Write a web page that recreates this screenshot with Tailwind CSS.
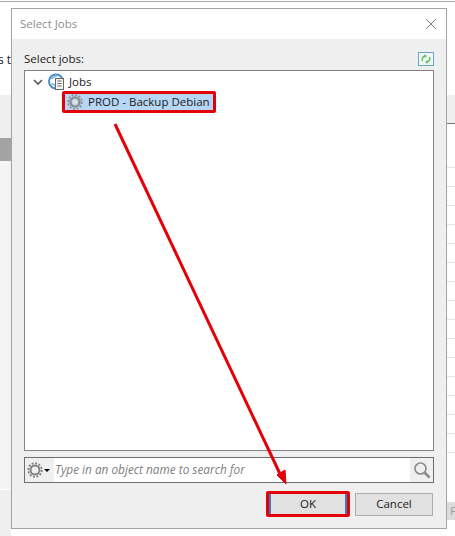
<!DOCTYPE html>
<html lang="en">
<head>
    <meta charset="UTF-8">
    <script src="https://cdn.jsdelivr.net/npm/@tailwindcss/browser@4"></script>
    <title>Select Jobs</title>
</head>
<body class="bg-white font-['Open_Sans','Noto_Sans',sans-serif] text-[11.5px] text-[#1a1a1a]">
    <div class="relative w-[455px] h-[536px] overflow-hidden">
        <!-- Window behind the dialog -->
        <div class="absolute top-0 left-0 w-full border-b border-[#a8a8a8] h-[2px]"></div>
        <div class="absolute left-[-2px] top-[52px] text-[12px] leading-4 whitespace-nowrap">s to</div>
        <div class="absolute left-0 top-[95px] w-[11px] h-[43px] bg-[#efefef]"></div>
        <div class="absolute left-0 top-[138px] w-[11px] h-[23px] bg-[#a3a3a3]"></div>
        <div class="absolute left-0 top-[161px] w-[11px] h-[328px] bg-[#f4f4f4]"></div>
        <div class="absolute left-0 top-[490px] w-[11px] h-[46px] bg-[#efefef]"></div>
        <div class="absolute right-0 top-[95px] w-[8px] h-[29px] bg-[#efefef] border-b border-[#777]"></div>
        <div class="absolute right-0 top-[167px] w-[8px] h-[300px] bg-[repeating-linear-gradient(to_bottom,#e4e4e4_0,#e4e4e4_1px,transparent_1px,transparent_19px)]"></div>
        <div class="absolute right-0 top-[502px] w-[8px] h-[18px] bg-[#dcdcdc] text-[#999] pl-[3px] leading-[18px] overflow-hidden">F</div>

        <!-- Select Jobs dialog -->
        <div class="absolute left-[11px] top-[8px] w-[436px] h-[521px] border border-[#a3a3a3] bg-[#efefef] flex flex-col">
            <div class="h-[30px] bg-white flex items-center justify-between pl-[8px] pr-[9px] text-[#8e8e8e] shrink-0">
                <span>Select Jobs</span>
                <svg class="w-[12px] h-[12px]" viewBox="0 0 12 12" fill="none" stroke="#808080" stroke-width="1"><path d="M1 1l10 10M11 1L1 11"/></svg>
            </div>
            <div class="flex-1 flex flex-col px-[12px] min-h-0">
                <div class="h-[31px] flex items-end justify-between pb-[3px] shrink-0">
                    <span class="leading-4">Select jobs:</span>
                    <svg class="w-[16px] h-[14px] mb-[1px]" viewBox="0 0 16 14" fill="none">
                        <rect x="0.5" y="0.5" width="15" height="13" fill="#f2f8fa" stroke="#6ba5c4"/>
                        <path d="M4.5 9a3.6 3.6 0 0 1 2.5-5M11.5 5a3.6 3.6 0 0 1-2.5 5" stroke="#63c556" stroke-width="1.6"/>
                        <path d="M6.5 2l2.5 2-2.5 2zM9.5 8l-2.5 2 2.5 2z" fill="#63c556"/>
                    </svg>
                </div>
                <div class="h-[381px] border border-[#828282] bg-white pl-[8px] pt-[2px] shrink-0">
                    <div class="flex items-center h-[17px]">
                        <svg class="w-[10px] h-[8px]" viewBox="0 0 10 8" fill="none" stroke="#555" stroke-width="1.6"><path d="M1 2l4 4 4-4"/></svg>
                        <svg class="w-[17px] h-[17px] ml-[5px]" viewBox="0 0 17 17" fill="none">
                            <circle cx="8" cy="8.5" r="7" stroke="#4c8fc4" stroke-width="2"/>
                            <path d="M3 5c2 1 3-2 6-2M3 12c1-2 3-1 4 1" stroke="#7fb5dc" stroke-width="1.5"/>
                            <rect x="7.5" y="5.5" width="8" height="11" fill="#f4f4f4" stroke="#666"/>
                            <path d="M9.5 8h4M9.5 10.5h4M9.5 13h4" stroke="#666"/>
                        </svg>
                        <span class="ml-[4px]">Jobs</span>
                    </div>
                    <div class="flex mt-[1px] ml-[29px]">
                        <div class="flex items-center h-[22px] w-[154px] bg-[#b8d6f5] border-[3px] border-[#e40008] rounded-[2px] pl-[2px]">
                            <svg class="w-[16px] h-[16px] shrink-0" viewBox="0 0 16 16" fill="none">
                                <circle cx="8" cy="8" r="4.6" stroke="#8c8c8c" stroke-width="2.4"/>
                                <circle cx="8" cy="8" r="7" stroke="#8c8c8c" stroke-width="1.6" stroke-dasharray="2 1.66"/>
                                <circle cx="8" cy="8" r="2.2" fill="#e2e2e2"/>
                            </svg>
                            <span class="ml-[5px] whitespace-nowrap">PROD - Backup Debian</span>
                        </div>
                    </div>
                </div>
                <div class="mt-[6px] h-[26px] border border-[#6e6e6e] bg-white flex items-center shrink-0">
                    <div class="w-[29px] h-full bg-[#efefef] flex items-center pl-[2px] gap-[1px]">
                        <svg class="w-[16px] h-[16px]" viewBox="0 0 16 16" fill="none">
                            <circle cx="8" cy="8" r="4.5" stroke="#808080" stroke-width="2"/>
                            <circle cx="8" cy="8" r="6.8" stroke="#808080" stroke-width="1.8" stroke-dasharray="2 1.56"/>
                        </svg>
                        <span class="w-0 h-0 border-x-[3px] border-x-transparent border-t-[3px] border-t-black"></span>
                    </div>
                    <span class="ml-[1px] flex-1 italic text-[11.8px] text-[#808080] whitespace-nowrap">Type in an object name to search for</span>
                    <div class="w-[23px] h-full bg-[#efefef] flex items-center justify-center">
                        <svg class="w-[18px] h-[18px]" viewBox="0 0 18 18" fill="none" stroke="#8a8a8a"><circle cx="7.5" cy="7.5" r="5.5" stroke-width="1.6"/><path d="M11.5 11.5l5 5" stroke-width="2.6"/></svg>
                    </div>
                </div>
                <div class="mt-[8px] flex justify-end items-center gap-[5px] pr-[1px]">
                    <button class="w-[84px] h-[26px] border-[3px] border-[#e40008] rounded-[2px] bg-[#e1e1e1] shadow-[inset_2px_0_0_#3d78bd,inset_-2px_0_0_#3d78bd]">OK</button>
                    <button class="w-[78px] h-[23px] border border-[#adadad] bg-[#e1e1e1]">Cancel</button>
                </div>
            </div>
        </div>

        <!-- Red arrow annotation -->
        <svg class="absolute inset-0 pointer-events-none" width="455" height="536" viewBox="0 0 455 536" fill="none">
            <path d="M115 124L281 476" stroke="#e40008" stroke-width="3"/>
            <path d="M286 484L277 475L285 470Z" fill="#e40008" stroke="#e40008"/>
        </svg>
    </div>
</body>
</html>
